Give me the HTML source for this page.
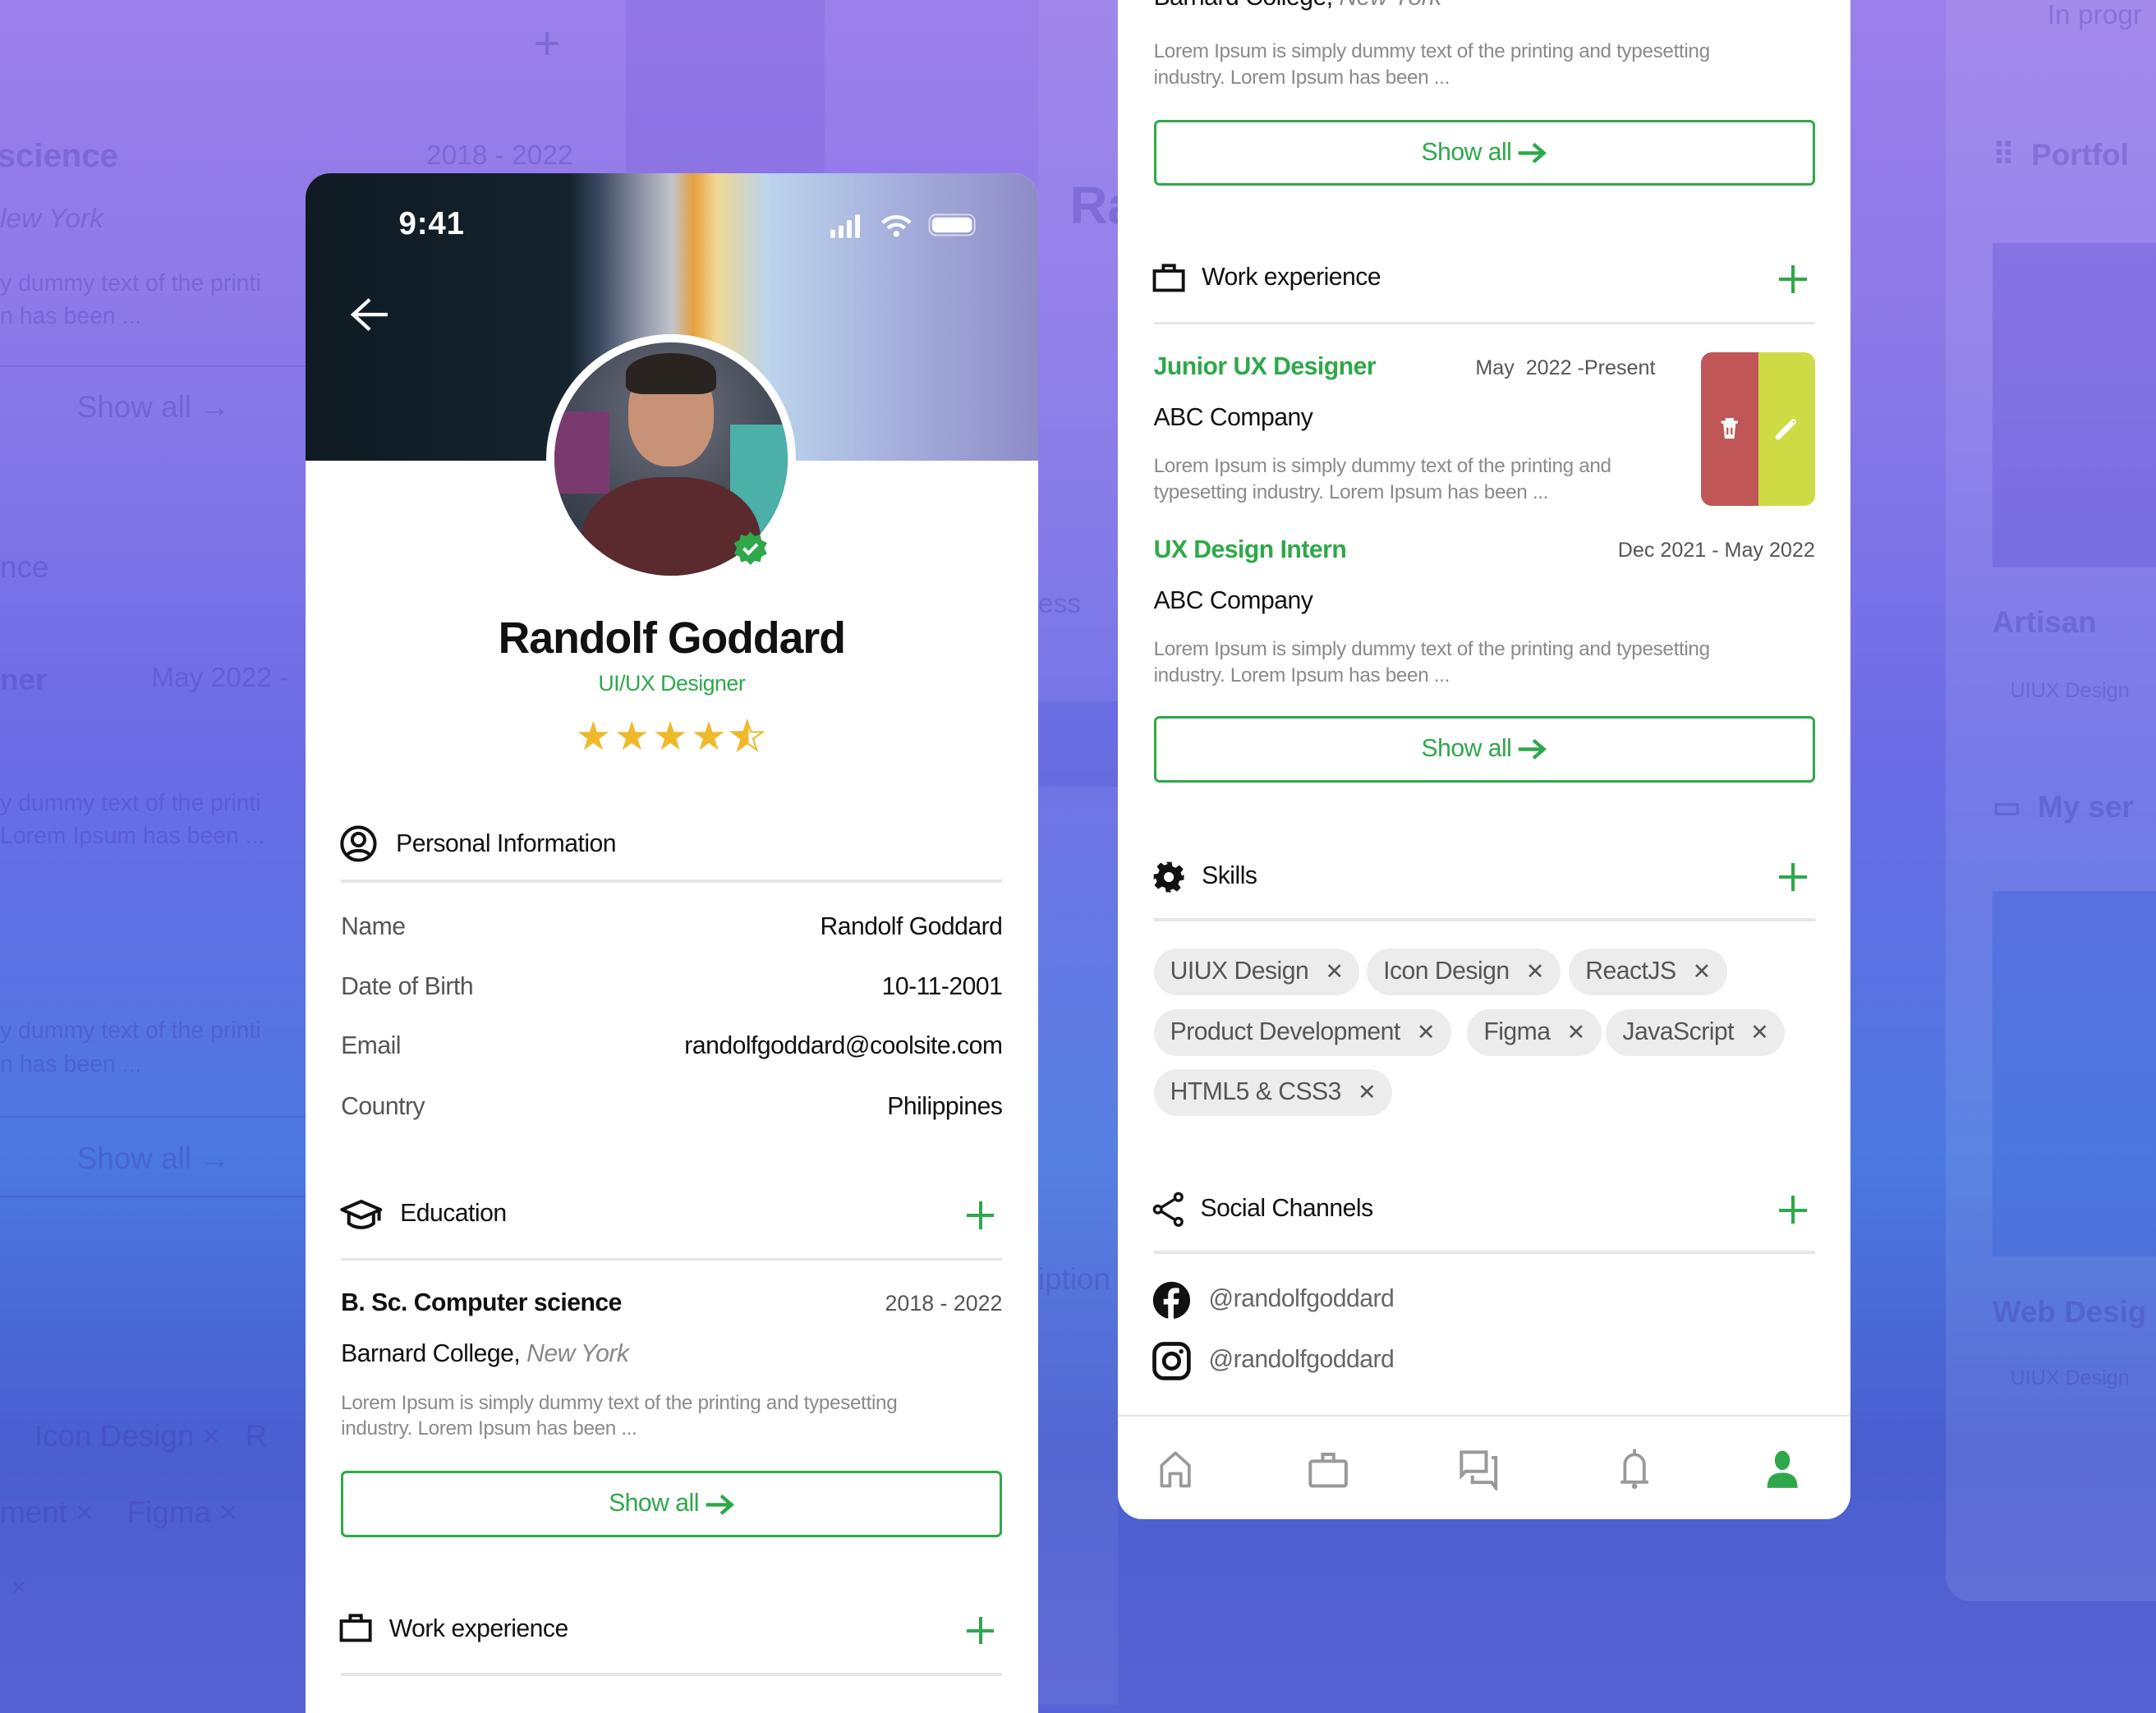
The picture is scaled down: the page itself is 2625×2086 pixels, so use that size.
<!DOCTYPE html>
<html style="background:#5762d4"><head><meta charset="utf-8">
<style>
html,body{margin:0;padding:0;}
body{width:1568px;height:1240px;zoom:1.67411;overflow:hidden;position:relative;font-family:"Liberation Sans",sans-serif;
background:linear-gradient(180deg,#9a80ea 0%,#8a78e8 22%,#6a6ce6 45%,#4b78e0 68%,#4a5ed0 85%,#5762d4 100%);}
.a{position:absolute;white-space:nowrap;}
.ghost{color:rgba(60,50,170,0.28);}
.card{position:absolute;background:#fff;overflow:hidden;}
.t18{font-size:18px;color:#111;letter-spacing:-0.3px;}
.g{color:#555;}
.lorem{font-size:14.5px;color:#8a8a8a;line-height:19px;letter-spacing:-0.2px;}
.div{position:absolute;height:2px;background:#e6e6e6;}
.btn{position:absolute;border:2px solid #2ea84a;border-radius:4px;color:#2ea84a;font-size:18px;text-align:center;box-sizing:border-box;letter-spacing:-0.3px;}
.btn svg{vertical-align:-3px;margin-left:4px}
.plus{position:absolute;width:20px;height:20px;}
.plus:before,.plus:after{content:"";position:absolute;background:#2ea84a;}
.plus:before{left:9px;top:0;width:2.4px;height:20px;}
.plus:after{top:9px;left:0;height:2.4px;width:20px;}
.chip{position:absolute;height:34px;line-height:34px;background:#ececec;border-radius:17px;font-size:18px;color:#555;padding:0 12px;letter-spacing:-0.3px;}
.chip span{margin-left:12px;font-size:16px;}
</style></head><body>

<div class="a" style="left:455px;top:0;width:145px;height:126px;background:rgba(120,90,220,0.25)"></div>
<div class="a" style="left:755px;top:0;width:58px;height:1240px;background:rgba(255,255,255,0.06)"></div>
<div class="a" style="left:755px;top:510px;width:58px;height:62px;background:rgba(60,80,200,0.2)"></div>
<div class="a" style="left:1415px;top:0;width:153px;height:1165px;background:rgba(255,255,255,0.09);border-radius:0 0 0 18px"></div>
<div class="a" style="left:1449px;top:177px;width:119px;height:236px;background:rgba(90,70,210,0.3)"></div>
<div class="a" style="left:1449px;top:648px;width:119px;height:266px;background:rgba(40,90,210,0.3)"></div>
<div class="a" style="left:0;top:266px;width:222px;height:1px;background:rgba(80,60,190,0.25)"></div>
<div class="a" style="left:0;top:812px;width:222px;height:1px;background:rgba(80,60,190,0.25)"></div>
<div class="a" style="left:0;top:870px;width:222px;height:1px;background:rgba(80,60,190,0.25)"></div>
<div class="a ghost" style="left:388px;top:12px;font-size:34px">+</div>
<div class="a ghost" style="left:-2px;top:100px;font-size:24px;font-weight:bold">science</div>
<div class="a ghost" style="left:310px;top:102px;font-size:20px">2018 - 2022</div>
<div class="a ghost" style="left:0;top:148px;font-size:20px;font-style:italic">lew York</div>
<div class="a ghost" style="left:0;top:194px;font-size:17px;line-height:24px">y dummy text of the printi<br>n has been ...</div>
<div class="a ghost" style="left:56px;top:284px;font-size:22px">Show all →</div>
<div class="a ghost" style="left:0;top:400px;font-size:22px">nce</div>
<div class="a ghost" style="left:0;top:482px;font-size:22px;font-weight:bold">ner</div>
<div class="a ghost" style="left:110px;top:482px;font-size:20px">May 2022 -</div>
<div class="a ghost" style="left:0;top:572px;font-size:17px;line-height:24px">y dummy text of the printi<br>Lorem Ipsum has been ...</div>
<div class="a ghost" style="left:0;top:738px;font-size:17px;line-height:24px">y dummy text of the printi<br>n has been ...</div>
<div class="a ghost" style="left:56px;top:830px;font-size:22px">Show all →</div>
<div class="a ghost" style="left:25px;top:1032px;font-size:22px">Icon Design ×&nbsp;&nbsp;&nbsp;R</div>
<div class="a ghost" style="left:0;top:1088px;font-size:22px">ment ×&nbsp;&nbsp;&nbsp;&nbsp;Figma ×</div>
<div class="a ghost" style="left:8px;top:1144px;font-size:20px">×</div>
<div class="a ghost" style="left:778px;top:128px;font-size:38px;font-weight:bold">Ra</div>
<div class="a ghost" style="left:755px;top:428px;font-size:20px">ess</div>
<div class="a ghost" style="left:755px;top:918px;font-size:22px">iption</div>
<div class="a ghost" style="left:1489px;top:0;font-size:20px">In progr</div>
<div class="a ghost" style="left:1449px;top:100px;font-size:22px;font-weight:bold">⠿&nbsp;&nbsp;Portfol</div>
<div class="a ghost" style="left:1449px;top:440px;font-size:22px;font-weight:bold">Artisan</div>
<div class="a ghost" style="left:1462px;top:494px;font-size:15px">UIUX Design</div>
<div class="a ghost" style="left:1449px;top:574px;font-size:22px;font-weight:bold">▭&nbsp;&nbsp;My ser</div>
<div class="a ghost" style="left:1449px;top:942px;font-size:22px;font-weight:bold">Web Desig</div>
<div class="a ghost" style="left:1462px;top:994px;font-size:15px">UIUX Design</div>

<!-- LEFT CARD -->
<div class="card" style="left:222px;top:126px;width:533px;height:1120px;border-radius:18px 18px 0 0">
  <div style="position:absolute;left:0;top:0;width:533px;height:209px;background:linear-gradient(90deg,#0f1a22 0%,#14232e 36%,#3a4860 40%,#9096a8 46%,#c0c4cc 50%,#e6a040 53%,#f0d890 56%,#bcd4ec 63%,#a6b0dc 80%,#8e8cc8 100%)"></div>
  <div class="a" style="left:68px;top:24px;font-size:23px;color:#fff;font-weight:bold;letter-spacing:0.5px">9:41</div>
  <svg class="a" style="left:382px;top:28px" width="110" height="22" viewBox="0 0 110 22">
    <rect x="0" y="13" width="3.5" height="6" rx="1" fill="#fff"/><rect x="6" y="10" width="3.5" height="9" rx="1" fill="#fff"/><rect x="12" y="6" width="3.5" height="13" rx="1" fill="#fff"/><rect x="18" y="2" width="3.5" height="17" rx="1" fill="#fff"/>
    <path d="M38 8 a14 14 0 0 1 20 0" stroke="#fff" stroke-width="2.6" fill="none"/><path d="M42 12 a8 8 0 0 1 12 0" stroke="#fff" stroke-width="2.6" fill="none"/><circle cx="48" cy="16" r="2.2" fill="#fff"/>
    <rect x="72" y="2" width="33" height="15" rx="5" fill="none" stroke="rgba(255,255,255,0.6)" stroke-width="1.2"/><rect x="74" y="4" width="29" height="11" rx="3.5" fill="#fff"/>
  </svg>
  <svg class="a" style="left:32px;top:88px" width="30" height="30" viewBox="0 0 30 30"><path d="M28 15H4M15 4L3 15l12 11" stroke="#fff" stroke-width="2.6" fill="none"/></svg>
  <div class="a" style="left:175px;top:117px;width:182px;height:182px;border-radius:50%;background:#fff"></div>
  <div class="a" style="left:181px;top:123px;width:170px;height:170px;border-radius:50%;overflow:hidden;background:radial-gradient(circle at 50% 30%,#6f6f7e 0%,#3d4450 60%,#2b2e3a 100%)">
    <div class="a" style="left:0;top:50px;width:40px;height:60px;background:#7a3a70"></div>
    <div class="a" style="left:128px;top:60px;width:42px;height:80px;background:#4ab0a8"></div>
    <div class="a" style="left:54px;top:14px;width:62px;height:76px;border-radius:45%;background:#c89276"></div>
    <div class="a" style="left:52px;top:8px;width:66px;height:30px;border-radius:50% 50% 20% 20%;background:#2a2420"></div>
    <div class="a" style="left:20px;top:98px;width:130px;height:100px;border-radius:45% 45% 0 0;background:#5a2a2e"></div>
  </div>
  <svg class="a" style="left:311px;top:260px" width="26" height="26" viewBox="0 0 26 26"><path d="M13 1l3 3 4-1 1 4 4 2-2 4 2 4-4 2-1 4-4-1-3 3-3-3-4 1-1-4-4-2 2-4-2-4 4-2 1-4 4 1z" fill="#2ea84a"/><path d="M8 13l3.5 3.5L18 10" stroke="#fff" stroke-width="2.4" fill="none"/></svg>
  <div class="a" style="left:0;width:533px;text-align:center;top:320px;font-size:32px;font-weight:bold;color:#111;letter-spacing:-0.6px">Randolf Goddard</div>
  <div class="a" style="left:0;width:533px;text-align:center;top:362px;font-size:16px;color:#2ea84a;letter-spacing:-0.3px">UI/UX Designer</div>
  <div class="a" style="left:0;width:533px;text-align:center;top:393px;font-size:29px;color:#f0b92a;letter-spacing:2px">★★★★<span style="background:linear-gradient(90deg,#f0b92a 50%,#fff 50%);-webkit-background-clip:text;color:transparent;-webkit-text-stroke:1.2px #f0b92a">★</span></div>

  <svg class="a" style="left:25px;top:474px" width="28" height="28" viewBox="0 0 28 28"><circle cx="14" cy="14" r="12" stroke="#111" stroke-width="2.4" fill="none"/><circle cx="14" cy="11" r="4.5" stroke="#111" stroke-width="2.4" fill="none"/><path d="M6 22c3-4 13-4 16 0" stroke="#111" stroke-width="2.4" fill="none"/></svg>
  <div class="a t18" style="left:66px;top:478px">Personal Information</div>
  <div class="div" style="left:26px;top:514px;width:481px"></div>
  <div class="a t18 g" style="left:26px;top:538px">Name</div><div class="a t18" style="right:26px;top:538px">Randolf Goddard</div>
  <div class="a t18 g" style="left:26px;top:582px">Date of Birth</div><div class="a t18" style="right:26px;top:582px">10-11-2001</div>
  <div class="a t18 g" style="left:26px;top:625px">Email</div><div class="a t18" style="right:26px;top:625px">randolfgoddard@coolsite.com</div>
  <div class="a t18 g" style="left:26px;top:669px">Country</div><div class="a t18" style="right:26px;top:669px">Philippines</div>

  <svg class="a" style="left:25px;top:745px" width="32" height="26" viewBox="0 0 32 26"><path d="M2 9L16 3l14 6-14 6z" stroke="#111" stroke-width="2.4" fill="none" stroke-linejoin="round"/><path d="M7 12v7c5 4 13 4 18 0v-7" stroke="#111" stroke-width="2.4" fill="none"/><path d="M29 9v8" stroke="#111" stroke-width="2.4"/></svg>
  <div class="a t18" style="left:69px;top:747px">Education</div>
  <div class="plus" style="left:481px;top:748px"></div>
  <div class="div" style="left:26px;top:789px;width:481px"></div>
  <div class="a t18" style="left:26px;top:812px;font-weight:bold">B. Sc. Computer science</div>
  <div class="a" style="right:26px;top:813px;font-size:16px;color:#555">2018 - 2022</div>
  <div class="a t18" style="left:26px;top:849px">Barnard College, <i style="color:#888">New York</i></div>
  <div class="a lorem" style="left:26px;top:885px">Lorem Ipsum is simply dummy text of the printing and typesetting<br>industry. Lorem Ipsum has been ...</div>
  <div class="btn" style="left:26px;top:944px;width:481px;height:48px;line-height:44px">Show all<svg width="22" height="16" viewBox="0 0 22 16"><path d="M1 8h18M12 1.5L19.5 8 12 14.5" stroke="#2ea84a" stroke-width="2.6" fill="none"/></svg></div>
  <svg class="a" style="left:25px;top:1047px" width="24" height="22" viewBox="0 0 24 22"><rect x="1.5" y="6" width="21" height="14" stroke="#111" stroke-width="2.3" fill="none"/><path d="M8 6V2h8v4" stroke="#111" stroke-width="2.3" fill="none"/></svg>
  <div class="a t18" style="left:61px;top:1049px">Work experience</div>
  <div class="plus" style="left:481px;top:1050px"></div>
  <div class="div" style="left:26px;top:1091px;width:481px"></div>
</div>

<!-- RIGHT CARD -->
<div class="card" style="left:813px;top:-20px;width:533px;height:1125px;border-radius:0 0 18px 18px">
  <div class="a t18" style="left:26px;top:8px">Barnard College, <i style="color:#888">New York</i></div>
  <div class="a lorem" style="left:26px;top:48px">Lorem Ipsum is simply dummy text of the printing and typesetting<br>industry. Lorem Ipsum has been ...</div>
  <div class="btn" style="left:26px;top:107px;width:481px;height:48px;line-height:44px">Show all<svg width="22" height="16" viewBox="0 0 22 16"><path d="M1 8h18M12 1.5L19.5 8 12 14.5" stroke="#2ea84a" stroke-width="2.6" fill="none"/></svg></div>
  <svg class="a" style="left:25px;top:211px" width="24" height="22" viewBox="0 0 24 22"><rect x="1.5" y="6" width="21" height="14" stroke="#111" stroke-width="2.3" fill="none"/><path d="M8 6V2h8v4" stroke="#111" stroke-width="2.3" fill="none"/></svg>
  <div class="a t18" style="left:61px;top:212px">Work experience</div>
  <div class="plus" style="left:481px;top:213px"></div>
  <div class="div" style="left:26px;top:254px;width:481px"></div>

  <div class="a t18" style="left:26px;top:277px;color:#2ea84a;font-weight:bold">Junior UX Designer</div>
  <div class="a" style="left:260px;top:279px;font-size:15px;color:#555">May&nbsp; 2022 -Present</div>
  <div class="a t18" style="left:26px;top:314px">ABC Company</div>
  <div class="a lorem" style="left:26px;top:350px">Lorem Ipsum is simply dummy text of the printing and<br>typesetting industry. Lorem Ipsum has been ...</div>
  <div class="a" style="left:424px;top:276px;width:83px;height:112px;border-radius:8px;overflow:hidden">
    <div class="a" style="left:0;top:0;width:42px;height:112px;background:#c05656"></div>
    <div class="a" style="left:42px;top:0;width:41px;height:112px;background:#cedb45"></div>
    <svg class="a" style="left:14px;top:48px" width="14" height="16" viewBox="0 0 14 16"><path d="M1 3h12M5 3V1h4v2" stroke="#fff" stroke-width="2"/><path d="M2.5 4h9l-1 11h-7z" fill="#fff"/><path d="M5.5 7v5M8.5 7v5" stroke="#c05656" stroke-width="1.4"/></svg>
    <svg class="a" style="left:53px;top:47px" width="18" height="18" viewBox="0 0 18 18"><path d="M3 15l11-11" stroke="#fff" stroke-width="4" stroke-linecap="round"/><circle cx="14.2" cy="3.8" r="0.8" fill="#cedb45"/></svg>
  </div>

  <div class="a t18" style="left:26px;top:410px;color:#2ea84a;font-weight:bold">UX Design Intern</div>
  <div class="a" style="right:26px;top:412px;font-size:15px;color:#555">Dec 2021 - May 2022</div>
  <div class="a t18" style="left:26px;top:447px">ABC Company</div>
  <div class="a lorem" style="left:26px;top:483px">Lorem Ipsum is simply dummy text of the printing and typesetting<br>industry. Lorem Ipsum has been ...</div>
  <div class="btn" style="left:26px;top:541px;width:481px;height:48px;line-height:44px">Show all<svg width="22" height="16" viewBox="0 0 22 16"><path d="M1 8h18M12 1.5L19.5 8 12 14.5" stroke="#2ea84a" stroke-width="2.6" fill="none"/></svg></div>

  <svg class="a" style="left:25px;top:646px" width="24" height="24" viewBox="0 0 24 24"><path d="M10 1h4l.6 3.2 2.4 1 2.7-1.9 2.8 2.8-1.9 2.7 1 2.4L23 10v4l-3.2.6-1 2.4 1.9 2.7-2.8 2.8-2.7-1.9-2.4 1L14 23h-4l-.6-3.2-2.4-1-2.7 1.9-2.8-2.8 1.9-2.7-1-2.4L1 14v-4l3.2-.6 1-2.4-1.9-2.7 2.8-2.8 2.7 1.9 2.4-1z" fill="#111"/><circle cx="12" cy="12" r="3.6" fill="#fff"/></svg>
  <div class="a t18" style="left:61px;top:647px">Skills</div>
  <div class="plus" style="left:481px;top:648px"></div>
  <div class="div" style="left:26px;top:688px;width:481px"></div>

  <div class="chip" style="left:26px;top:710px">UIUX Design<span>✕</span></div>
  <div class="chip" style="left:181px;top:710px">Icon Design<span>✕</span></div>
  <div class="chip" style="left:328px;top:710px">ReactJS<span>✕</span></div>
  <div class="chip" style="left:26px;top:754px">Product Development<span>✕</span></div>
  <div class="chip" style="left:254px;top:754px">Figma<span>✕</span></div>
  <div class="chip" style="left:355px;top:754px">JavaScript<span>✕</span></div>
  <div class="chip" style="left:26px;top:798px">HTML5 &amp; CSS3<span>✕</span></div>

  <svg class="a" style="left:25px;top:887px" width="24" height="26" viewBox="0 0 24 26"><circle cx="19" cy="4" r="2.6" stroke="#111" stroke-width="2" fill="none"/><circle cx="4" cy="13" r="2.6" stroke="#111" stroke-width="2" fill="none"/><circle cx="19" cy="22" r="2.6" stroke="#111" stroke-width="2" fill="none"/><path d="M6.3 11.7L16.7 5.3M6.3 14.3l10.4 6.4" stroke="#111" stroke-width="2"/></svg>
  <div class="a t18" style="left:60px;top:889px">Social Channels</div>
  <div class="plus" style="left:481px;top:890px"></div>
  <div class="div" style="left:26px;top:930px;width:481px"></div>

  <svg class="a" style="left:25px;top:952px" width="28" height="28" viewBox="0 0 28 28"><circle cx="14" cy="14" r="13.5" fill="#111"/><path d="M15.5 28V17h3.4l.5-4h-3.9v-2.4c0-1.1.4-1.9 2-1.9h2V5.2c-.4 0-1.6-.2-3-.2-3 0-5 1.8-5 5.1V13H8.2v4h3.3v11z" fill="#fff"/></svg>
  <div class="a" style="left:66px;top:955px;font-size:18px;color:#666;letter-spacing:-0.3px">@randolfgoddard</div>
  <svg class="a" style="left:25px;top:996px" width="28" height="28" viewBox="0 0 28 28"><rect x="1.5" y="1.5" width="25" height="25" rx="7" stroke="#111" stroke-width="2.8" fill="none"/><circle cx="14" cy="14" r="5.5" stroke="#111" stroke-width="2.8" fill="none"/><circle cx="21" cy="7" r="1.6" fill="#111"/></svg>
  <div class="a" style="left:66px;top:999px;font-size:18px;color:#666;letter-spacing:-0.3px">@randolfgoddard</div>

  <div class="div" style="left:0;top:1049px;width:533px;height:1.5px"></div>
  <svg class="a" style="left:30px;top:1075px" width="24" height="28" viewBox="0 0 24 28"><path d="M2 26V11L12 2l10 9v15h-6V17h-8v9z" stroke="#999" stroke-width="2.2" fill="none" stroke-linejoin="round"/></svg>
  <svg class="a" style="left:138px;top:1075px" width="30" height="28" viewBox="0 0 30 28"><rect x="2" y="8" width="26" height="18" rx="1.5" stroke="#999" stroke-width="2.4" fill="none"/><path d="M11 8V3h8v5" stroke="#999" stroke-width="2.4" fill="none"/></svg>
  <svg class="a" style="left:248px;top:1074px" width="30" height="30" viewBox="0 0 30 30"><path d="M2 2h18v14H5l-3 3z" stroke="#999" stroke-width="2.4" fill="none"/><path d="M24 6h3v22l-3-4H10v-5" stroke="#999" stroke-width="2.4" fill="none"/></svg>
  <svg class="a" style="left:364px;top:1073px" width="24" height="32" viewBox="0 0 24 32"><path d="M12 1v3M5 25V12a7 7 0 0 1 14 0v13M2 25h20" stroke="#999" stroke-width="2.3" fill="none"/><circle cx="12" cy="28" r="2" fill="#999"/></svg>
  <svg class="a" style="left:471px;top:1074px" width="24" height="30" viewBox="0 0 24 30"><ellipse cx="12" cy="8" rx="5.5" ry="7" fill="#2ea84a"/><path d="M1 28c0-8 4-11 11-11s11 3 11 11z" fill="#2ea84a"/></svg>
</div>
</body></html>
